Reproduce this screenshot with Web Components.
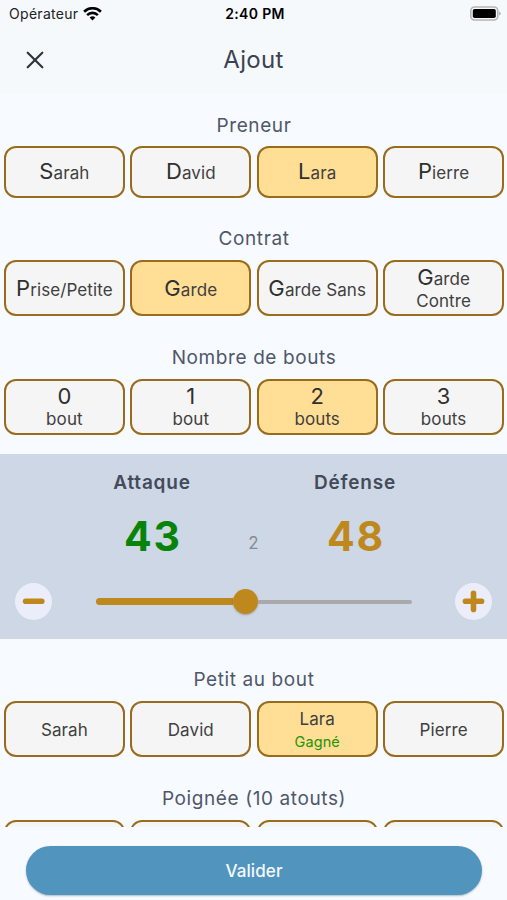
<!DOCTYPE html>
<html lang="fr">
<head>
<meta charset="utf-8">
<title>Ajout</title>
<style>
    body {
        margin: 0;
        background: #f7fbff;
        font-family: Inter, "Liberation Sans", sans-serif;
    }
</style>
</head>
<body>
<template id="screen-template">
    <style>
        :host {
            display: flex;
            flex-direction: column;
            height: 900px;
            overflow: hidden;
        }
        .content {
            flex: none;
            height: 733px;
            overflow: hidden;
        }
        .footer {
            padding: 19px 25px 0 26px;
        }
    </style>
    <slot name="header"></slot>
    <div class="content"><slot></slot></div>
    <div class="footer"><slot name="footer"></slot></div>
</template>

<template id="header-template">
    <style>
        :host {
            display: block;
            height: 94px;
            background: #f5f9fc;
        }
        .status, .nav {
            display: grid;
            grid-template-columns: 1fr auto 1fr;
            align-items: center;
        }
        .status {
            height: 27px;
            padding: 0 6px 0 9px;
            color: #222;
            font-size: 14px;
        }
        .carrier {
            display: flex;
            align-items: center;
            gap: 5px;
            letter-spacing: 0.3px;
        }
        .time {
            color: #000;
            font-weight: 600;
            letter-spacing: 0.35px;
        }
        .battery {
            justify-self: end;
        }
        .nav {
            height: 65px;
            padding: 0 26px;
            color: #3c4350;
            font-size: 24px;
            letter-spacing: 0.3px;
        }
        svg {
            display: block;
        }
    </style>
    <div class="status">
        <div class="carrier">
            <span id="carrier"></span>
            <svg width="19" height="14" viewBox="0 0 19 14" fill="none" stroke="#000" stroke-width="2.6">
                <path d="M1.1 4.7a12 12 0 0 1 16.8 0"/>
                <path d="M4.1 8.1a7.7 7.7 0 0 1 10.8 0"/>
                <path d="M9.5 13.6l-2.9-3a4.1 4.1 0 0 1 5.8 0z" fill="#000" stroke="none"/>
            </svg>
        </div>
        <span class="time" id="time"></span>
        <svg class="battery" width="31" height="15" viewBox="0 0 31 15">
            <rect x="0.8" y="1" width="27" height="13" rx="3.8" fill="#f5f9fc" stroke="#b3b5b7" stroke-width="1.6"/>
            <rect x="2.8" y="3" width="23" height="9" rx="1.8" fill="#000"/>
            <path d="M29 5.4q1.8.6 1.8 2.1T29 9.6z" fill="#b3b5b7"/>
        </svg>
    </div>
    <div class="nav">
        <svg width="18" height="18" viewBox="0 0 18 18" stroke="#30353d" stroke-width="2.2" stroke-linecap="round">
            <path d="M1.7 1.7l14.6 14.6M16.3 1.7L1.7 16.3"/>
        </svg>
        <span><slot></slot></span>
    </div>
</template>

<template id="section-template">
    <style>
        :host {
            display: block;
            padding: 0 3px 0 4px;
        }
        .title {
            padding-top: 29.6px;
            height: 32.8px;
            color: #505769;
            font-size: 19px;
            line-height: 24px;
            letter-spacing: 0.6px;
            text-align: center;
        }
        :host([first]) .title {
            padding-top: 20px;
            height: 32px;
        }
        .row {
            display: grid;
            grid-template-columns: repeat(4, 1fr);
            gap: 5.6px;
        }
    </style>
    <div class="title" id="title"></div>
    <div class="row"><slot></slot></div>
</template>

<template id="choice-template">
    <style>
        :host {
            display: flex;
            flex-direction: column;
            align-items: center;
            justify-content: center;
            box-sizing: border-box;
            height: 56.3px;
            padding-top: 3px;
            border: 2px solid #986c1c;
            border-radius: 12px;
            background: #f5f5f5;
            color: #404040;
            font-size: 17px;
            line-height: 21.6px;
            letter-spacing: 0.1px;
            text-align: center;
        }
        :host([short]) {
            height: 51.5px;
        }
        :host([selected]) {
            background: #ffde95;
        }
        .label {
            display: block;
        }
        :host([initial]) .label::first-letter {
            font-size: 22px;
            color: #303030;
        }
        .note {
            margin-top: 1px;
            color: #259408;
            font-size: 14.5px;
        }
        .note:empty {
            display: none;
        }
    </style>
    <span class="label"><slot></slot></span>
    <span class="note" id="note"></span>
</template>

<template id="score-template">
    <style>
        :host {
            display: block;
            box-sizing: border-box;
            height: 184.3px;
            margin-top: 19.6px;
            background: #ced7e5;
        }
        .scores {
            display: grid;
            grid-template-columns: 153px 50px 153px;
            justify-content: center;
            padding-top: 17px;
            text-align: center;
        }
        .name {
            color: #434b5b;
            font-size: 19px;
            font-weight: 600;
            line-height: 24px;
            letter-spacing: 0.8px;
        }
        .value {
            margin-top: 15px;
            padding-left: 2px;
            font-size: 41px;
            font-weight: 700;
            line-height: 52px;
            letter-spacing: 1.8px;
        }
        .attack {
            color: #088408;
        }
        .defense {
            color: #bf881c;
        }
        .diff {
            align-self: end;
            padding-bottom: 8px;
            color: #868c96;
            font-size: 17px;
            line-height: 22px;
        }
        .controls {
            display: flex;
            align-items: center;
            justify-content: space-between;
            padding: 21px 15px 0;
        }
        .round {
            display: block;
            width: 37px;
            height: 37px;
            padding: 0;
            border: 0;
            border-radius: 50%;
            background: #ebeefa;
        }
        .round svg {
            display: block;
        }
        .slider {
            display: flex;
            align-items: center;
            width: 316px;
            height: 26px;
        }
        .done {
            width: 137px;
            height: 7px;
            border-radius: 4px 0 0 4px;
            background: #bf881c;
        }
        .thumb {
            width: 25px;
            height: 25px;
            border-radius: 50%;
            background: #bf881c;
            box-shadow: 0 1px 2px rgba(60, 60, 60, .35);
        }
        .rest {
            flex: 1;
            height: 4.5px;
            border-radius: 0 3px 3px 0;
            background: #a9a9a9;
        }
    </style>
    <div class="scores">
        <div>
            <div class="name">Attaque</div>
            <div class="value attack" id="attack"></div>
        </div>
        <div class="diff" id="diff"></div>
        <div>
            <div class="name">Défense</div>
            <div class="value defense" id="defense"></div>
        </div>
    </div>
    <div class="controls">
        <button class="round" id="minus">
            <svg width="37" height="37" viewBox="0 0 37 37" stroke="#bf881c" stroke-width="5.6" stroke-linecap="round"><path d="M10.6 18.3h16.2"/></svg>
        </button>
        <div class="slider">
            <div class="done"></div>
            <div class="thumb"></div>
            <div class="rest"></div>
        </div>
        <button class="round" id="plus">
            <svg width="37" height="37" viewBox="0 0 37 37" stroke="#bf881c" stroke-width="5.6" stroke-linecap="round"><path d="M10.4 18.3h16.2M18.5 10.2v16.2"/></svg>
        </button>
    </div>
</template>

<template id="submit-template">
    <style>
        :host {
            display: block;
        }
        button {
            display: block;
            width: 100%;
            height: 49px;
            padding: 0;
            border: 0;
            border-radius: 25px;
            background: #5195be;
            box-shadow: 0 1px 2px rgba(40, 60, 80, .35);
            color: #f3f9fd;
            font: inherit;
            font-size: 17px;
            font-weight: 500;
            letter-spacing: 0.1px;
        }
    </style>
    <button><slot></slot></button>
</template>

<tarot-screen>
    <tarot-header slot="header" carrier="Opérateur" time="2:40 PM">Ajout</tarot-header>

    <tarot-section first label="Preneur">
        <tarot-choice initial short>Sarah</tarot-choice>
        <tarot-choice initial short>David</tarot-choice>
        <tarot-choice initial short selected>Lara</tarot-choice>
        <tarot-choice initial short>Pierre</tarot-choice>
    </tarot-section>
    <tarot-section label="Contrat">
        <tarot-choice initial>Prise/Petite</tarot-choice>
        <tarot-choice initial selected>Garde</tarot-choice>
        <tarot-choice initial>Garde Sans</tarot-choice>
        <tarot-choice initial>Garde<br>Contre</tarot-choice>
    </tarot-section>
    <tarot-section label="Nombre de bouts">
        <tarot-choice initial>0<br>bout</tarot-choice>
        <tarot-choice initial>1<br>bout</tarot-choice>
        <tarot-choice initial selected>2<br>bouts</tarot-choice>
        <tarot-choice initial>3<br>bouts</tarot-choice>
    </tarot-section>

    <tarot-score attack="43" defense="48"></tarot-score>

    <tarot-section label="Petit au bout">
        <tarot-choice>Sarah</tarot-choice>
        <tarot-choice>David</tarot-choice>
        <tarot-choice selected note="Gagné">Lara</tarot-choice>
        <tarot-choice>Pierre</tarot-choice>
    </tarot-section>
    <tarot-section label="Poignée (10 atouts)">
        <tarot-choice></tarot-choice>
        <tarot-choice></tarot-choice>
        <tarot-choice></tarot-choice>
        <tarot-choice></tarot-choice>
    </tarot-section>

    <tarot-submit slot="footer">Valider</tarot-submit>
</tarot-screen>

<script>
    class TarotElement extends HTMLElement {
        constructor(templateId) {
            super();
            const template = document.querySelector(templateId);
            this.attachShadow({ mode: 'open' });
            this.shadowRoot.appendChild(document.importNode(template.content, true));
        }

        _text(id, value) {
            this.shadowRoot.querySelector(id).textContent = value || '';
        }
    }

    customElements.define('tarot-screen', class extends TarotElement {
        constructor() { super('#screen-template'); }
    });

    customElements.define('tarot-header', class extends TarotElement {
        constructor() { super('#header-template'); }

        connectedCallback() {
            this._text('#carrier', this.getAttribute('carrier'));
            this._text('#time', this.getAttribute('time'));
        }
    });

    customElements.define('tarot-section', class extends TarotElement {
        constructor() { super('#section-template'); }

        connectedCallback() {
            this._text('#title', this.getAttribute('label'));
        }
    });

    customElements.define('tarot-choice', class extends TarotElement {
        constructor() { super('#choice-template'); }

        connectedCallback() {
            this._text('#note', this.getAttribute('note'));
            this.addEventListener('click', this._onClick.bind(this));
        }

        _onClick() {
            for (const el of this.parentElement.children)
                el.toggleAttribute('selected', el === this);
        }
    });

    customElements.define('tarot-score', class extends TarotElement {
        static get observedAttributes() {
            return ['attack', 'defense'];
        }

        constructor() {
            super('#score-template');
            this.shadowRoot.querySelector('#minus').onclick = () => this._move(-1);
            this.shadowRoot.querySelector('#plus').onclick = () => this._move(1);
        }

        attributeChangedCallback() {
            this._render();
        }

        _move(step) {
            const attack = parseInt(this.getAttribute('attack')) + step;
            if (attack < 0 || attack > 91) return;
            this.setAttribute('attack', attack);
            this.setAttribute('defense', 91 - attack);
        }

        _render() {
            const attack = parseInt(this.getAttribute('attack'));
            this._text('#attack', String(attack));
            this._text('#defense', this.getAttribute('defense'));
            // two oudlers: 41 points are needed
            this._text('#diff', String(attack - 41));
            // the thumb is 25px wide and stays inside the track
            this.shadowRoot.querySelector('.done').style.width = Math.round(attack / 91 * 290) + 'px';
        }
    });

    customElements.define('tarot-submit', class extends TarotElement {
        constructor() { super('#submit-template'); }
    });
</script>
</body>
</html>
